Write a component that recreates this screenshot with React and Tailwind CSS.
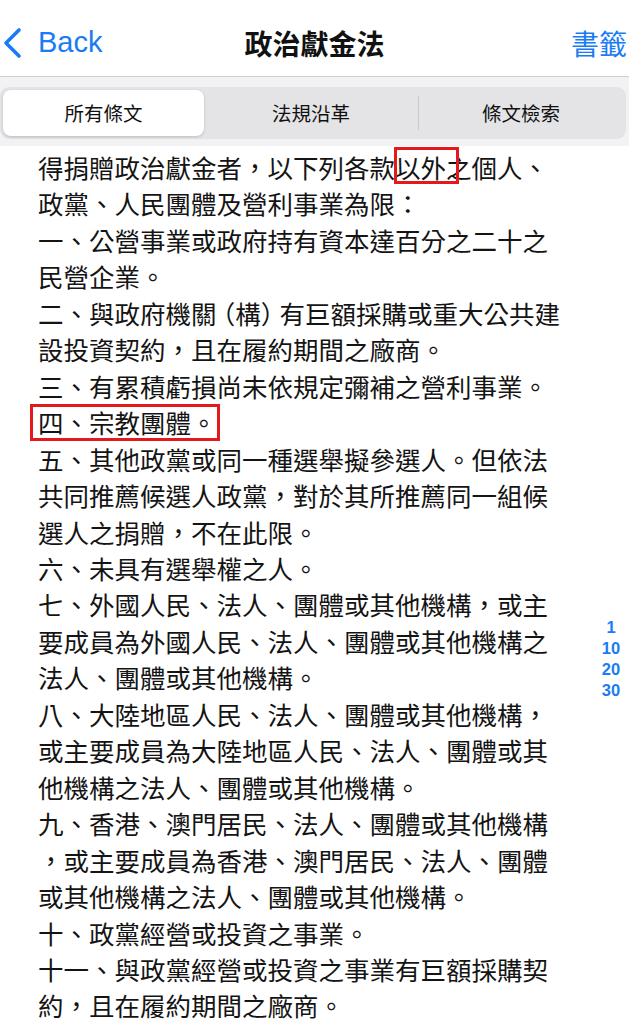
import React from 'react';

const lines = [
  '得捐贈政治獻金者，以下列各款以外之個人、',
  '政黨、人民團體及營利事業為限：',
  '一、公營事業或政府持有資本達百分之二十之',
  '民營企業。',
  '二、與政府機關（構）有巨額採購或重大公共建',
  '設投資契約，且在履約期間之廠商。',
  '三、有累積虧損尚未依規定彌補之營利事業。',
  '四、宗教團體。',
  '五、其他政黨或同一種選舉擬參選人。但依法',
  '共同推薦候選人政黨，對於其所推薦同一組候',
  '選人之捐贈，不在此限。',
  '六、未具有選舉權之人。',
  '七、外國人民、法人、團體或其他機構，或主',
  '要成員為外國人民、法人、團體或其他機構之',
  '法人、團體或其他機構。',
  '八、大陸地區人民、法人、團體或其他機構，',
  '或主要成員為大陸地區人民、法人、團體或其',
  '他機構之法人、團體或其他機構。',
  '九、香港、澳門居民、法人、團體或其他機構',
  '，或主要成員為香港、澳門居民、法人、團體',
  '或其他機構之法人、團體或其他機構。',
  '十、政黨經營或投資之事業。',
  '十一、與政黨經營或投資之事業有巨額採購契',
  '約，且在履約期間之廠商。',
];

const font = { fontFamily: '"Noto Sans CJK TC", "Noto Sans", sans-serif' };

function Line({ text, i }) {
  if (i === 0) {
    return (
      <div className="whitespace-nowrap">
        得捐贈政治獻金者，以下列各款
        <span className="relative inline-block">
          以外
          <span className="absolute left-[-1px] right-[-13px] top-[-2px] h-[37px] border-[3px] border-[#e3191c]" />
        </span>
        之個人、
      </div>
    );
  }
  if (i === 4) {
    return (
      <div className="whitespace-nowrap">
        二、與政府機關
        <span className="[font-feature-settings:'halt'] pl-[6px]">（</span>構<span className="[font-feature-settings:'halt'] pr-[6px]">）</span>
        有巨額採購或重大公共建
      </div>
    );
  }
  if (i === 7) {
    return (
      <div className="whitespace-nowrap">
        <span className="relative inline-block">
          四、宗教團體。
          <span className="absolute left-[-8px] right-[-3px] top-0 h-[37px] border-[3px] border-[#e3191c]" />
        </span>
      </div>
    );
  }
  return <div className="whitespace-nowrap">{text}</div>;
}

export default function App() {
  return (
    <div className="w-[629px] h-[1024px] overflow-hidden bg-white relative" style={font}>
      {/* nav bar */}
      <div className="h-[77px] pt-[9px] flex items-center justify-between border-b border-[#cfcfd2] relative">
        <div className="flex items-center text-[#1a7cf5]">
          <svg width="24" height="32" viewBox="0 0 24 32" className="ml-[1px]">
            <path d="M18 3 L5 16 L18 29" fill="none" stroke="#1a7cf5" strokeWidth="3.6" strokeLinecap="round" strokeLinejoin="round" />
          </svg>
          <span className="ml-[13px] text-[29px] leading-none" style={{ fontFamily: '"Liberation Sans", Inter, sans-serif' }}>Back</span>
        </div>
        <div className="absolute left-0 right-0 top-0 pt-[9px] h-[77px] flex items-center justify-center pointer-events-none">
          <span className="text-[28px] font-bold text-[#111]">政治獻金法</span>
        </div>
        <span className="text-[28px] text-[#1a7cf5] mr-[2px]">書籤</span>
      </div>

      {/* segmented control */}
      <div className="bg-[#f2f2f4] pt-[10px] pb-[7px]">
        <div className="bg-[#e4e4e7] rounded-[9px] p-[3px] flex h-[52px] mr-[3px]">
          <div className="w-[201px] bg-white rounded-[8px] shadow-[0_1px_3px_rgba(0,0,0,0.18)] flex items-center justify-center text-[19.5px] text-[#111]">
            所有條文
          </div>
          <div className="w-[214px] flex items-center justify-center text-[19.5px] text-[#111]">法規沿革</div>
          <div className="w-[1px] my-[6px] bg-[#c9c9cc]" />
          <div className="flex-1 flex items-center justify-center text-[19.5px] text-[#111]">條文檢索</div>
        </div>
      </div>

      {/* article text */}
      <div className="pl-[38px] pt-[3px] text-[25.5px] leading-[36.45px] text-[#141414]">
        {lines.map((t, i) => (
          <Line key={i} text={t} i={i} />
        ))}
      </div>

      {/* section index */}
      <div className="absolute right-[3px] top-[617px] w-[30px] flex flex-col items-center text-[16.5px] leading-[21px] font-semibold text-[#1a7cf5]" style={{ fontFamily: '"Liberation Sans", Inter, sans-serif' }}>
        <span>1</span>
        <span>10</span>
        <span>20</span>
        <span>30</span>
      </div>
    </div>
  );
}
